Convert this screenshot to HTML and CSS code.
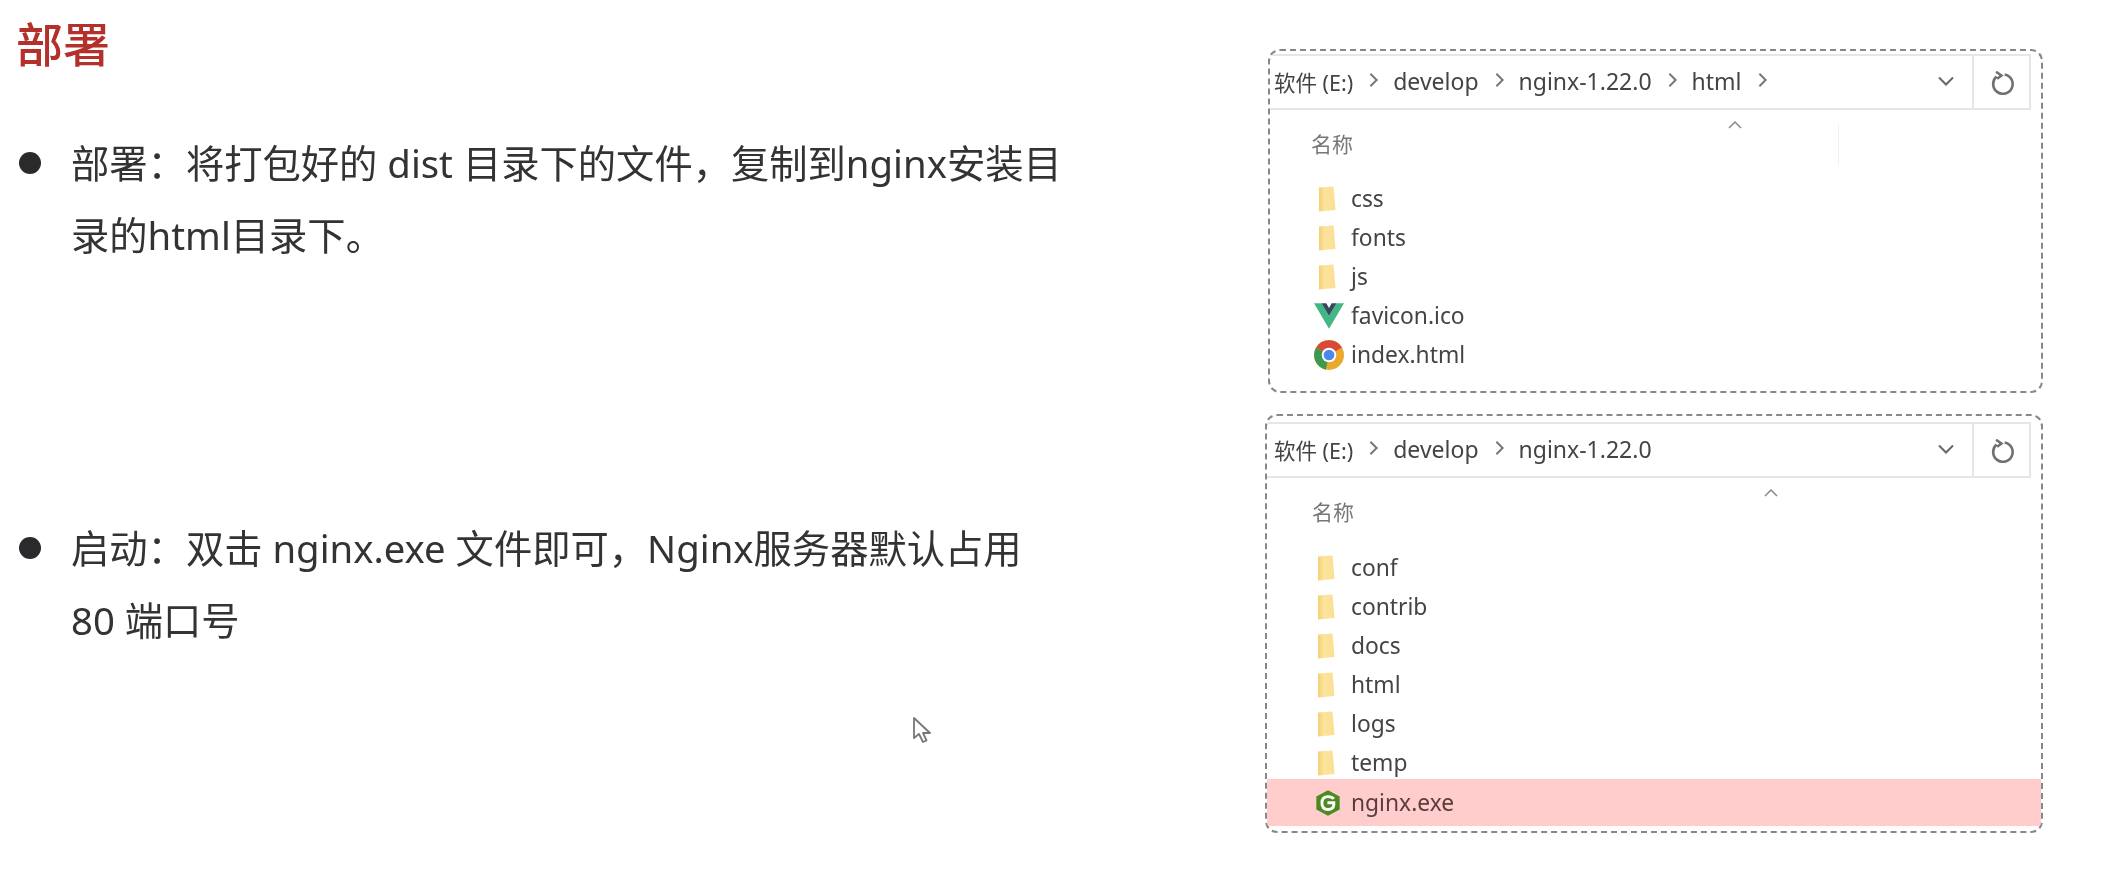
FILE: index.html
```html
<!DOCTYPE html>
<html lang="zh-CN">
<head>
<meta charset="utf-8">
<title>部署</title>
<link rel="stylesheet" href="styles.css">
</head>
<body>
<svg class="defs" width="0" height="0" aria-hidden="true">
  <defs>
    <linearGradient id="fold" x1="0" y1="0" x2="1" y2="0">
      <stop offset="0" stop-color="#f3cf72"/>
      <stop offset="0.35" stop-color="#fce49d"/>
      <stop offset="1" stop-color="#fbdf92"/>
    </linearGradient>
    <symbol id="folder" viewBox="0 0 18 26">
      <path d="M1 1.5 L15.5 0.5 L17.5 24 L1 25.5 Z" fill="url(#fold)"/>
    </symbol>
    <symbol id="chev" viewBox="0 0 10 16">
      <path d="M2.5 3 L7.5 8 L2.5 13" fill="none" stroke="#777" stroke-width="1.6"/>
    </symbol>
    <symbol id="down" viewBox="0 0 18 12">
      <path d="M2 2.5 L9 9.5 L16 2.5" fill="none" stroke="#666" stroke-width="2"/>
    </symbol>
    <symbol id="up" viewBox="0 0 16 10">
      <path d="M2 8 L8 2 L14 8" fill="none" stroke="#888" stroke-width="1.5"/>
    </symbol>
    <symbol id="refresh" viewBox="0 0 24 24">
      <path d="M6.500 2.500 L11.500 6 L7.500 9 M14.500 5 A9 9 0 1 1 7 7" fill="none" stroke="#707070" stroke-width="2.400"/>
    </symbol>
  </defs>
</svg>
<div class="page">
  <section class="notes">
    <h1 class="title">部署</h1>
    <ul class="points">
      <li class="point">部署：将打包好的 dist 目录下的文件，复制到nginx安装目<br>录的html目录下。</li>
      <li class="point">启动：双击 nginx.exe 文件即可，Nginx服务器默认占用<br>80 端口号</li>
    </ul>
  </section>
  <section class="shots">
    <div class="panel panel-one">
      <div class="bar">
        <div class="crumbs">
          <span class="drive">软件 (E:)</span><svg class="chev"><use href="#chev"/></svg>
          <span>develop</span><svg class="chev"><use href="#chev"/></svg>
          <span>nginx-1.22.0</span><svg class="chev"><use href="#chev"/></svg>
          <span>html</span><svg class="chev"><use href="#chev"/></svg>
        </div>
        <svg class="down"><use href="#down"/></svg>
        <div class="reload"><svg class="refresh"><use href="#refresh"/></svg></div>
      </div>
      <div class="head head-one">
        <svg class="up"><use href="#up"/></svg>
        <span class="head-label">名称</span>
        <i class="head-rule"></i>
      </div>
      <ul class="files">
        <li class="file"><svg class="ico"><use href="#folder"/></svg>css</li>
        <li class="file"><svg class="ico"><use href="#folder"/></svg>fonts</li>
        <li class="file"><svg class="ico"><use href="#folder"/></svg>js</li>
        <li class="file">
          <svg class="ico ico-app" viewBox="0 0 28 26"><path d="M0 1 H7 L14 13 L21 1 H28 L14 25 Z" fill="#41b883"/><path d="M7 1 H11.500 L14 5.500 L16.500 1 H21 L14 13 Z" fill="#35495e"/></svg>favicon.ico
        </li>
        <li class="file">
          <svg class="ico ico-app" viewBox="0 0 28 28"><circle cx="14" cy="14" r="14" fill="#e8a92d"/><path d="M14 14 L2 7 A14 14 0 0 1 26.100 7 Z" fill="#d9483b"/><path d="M14 14 L2 7 A14 14 0 0 0 11 27.700 Z" fill="#3c9a50"/><circle cx="14" cy="14" r="6.800" fill="#fff"/><circle cx="14" cy="14" r="5" fill="#4a89ea"/></svg>index.html
        </li>
      </ul>
    </div>
    <div class="panel panel-two">
      <div class="bar">
        <div class="crumbs">
          <span class="drive">软件 (E:)</span><svg class="chev"><use href="#chev"/></svg>
          <span>develop</span><svg class="chev"><use href="#chev"/></svg>
          <span>nginx-1.22.0</span>
        </div>
        <svg class="down"><use href="#down"/></svg>
        <div class="reload"><svg class="refresh"><use href="#refresh"/></svg></div>
      </div>
      <div class="head head-two">
        <svg class="up"><use href="#up"/></svg>
        <span class="head-label">名称</span>
      </div>
      <ul class="files">
        <li class="file"><svg class="ico"><use href="#folder"/></svg>conf</li>
        <li class="file"><svg class="ico"><use href="#folder"/></svg>contrib</li>
        <li class="file"><svg class="ico"><use href="#folder"/></svg>docs</li>
        <li class="file"><svg class="ico"><use href="#folder"/></svg>html</li>
        <li class="file"><svg class="ico"><use href="#folder"/></svg>logs</li>
        <li class="file"><svg class="ico"><use href="#folder"/></svg>temp</li>
        <li class="file file-hit">
          <svg class="ico ico-g" viewBox="0 0 24 24"><path d="M12 1 L22 6.500 V17.500 L12 23 L2 17.500 V6.500 Z" fill="#4b8a1f"/><path d="M17 8.500 Q15.500 6.500 12 6.500 Q6.800 6.500 6.800 12 Q6.800 17.500 12 17.500 Q17 17.500 17 13 V11.800 H11.500" fill="none" stroke="#fff" stroke-width="2.500"/></svg>nginx.exe
        </li>
      </ul>
    </div>
  </section>
  <svg class="cursor" viewBox="0 0 20 28"><path d="M2 2 V22 L7 18 L11 26 L14.500 24.500 L11 17 H18 Z" fill="#fff" stroke="#777" stroke-width="1.800" stroke-linejoin="round"/></svg>
</div>
</body>
</html>
```

FILE: styles.css
```css
* { box-sizing: border-box; }
html, body { margin: 0; height: 100%; background: #fff; }
ul { list-style: none; margin: 0; padding: 0; }
.defs { position: absolute; }

.page {
  position: relative;
  display: flex;
  width: 2118px;
  height: 884px;
  overflow: hidden;
  filter: blur(0.55px);
  font-family: "Noto Sans", "Noto Sans CJK SC", sans-serif;
}

.notes { width: 1265px; padding: 0 0 0 16px; flex: none; }
.title {
  margin: 17px 0 0;
  font-size: 47px;
  line-height: 54px;
  font-weight: 500;
  color: #b4302a;
}
.points { margin-top: 56px; }
.point {
  position: relative;
  padding-left: 55px;
  font-size: 38.3px;
  line-height: 72px;
  color: #333;
  white-space: nowrap;
}
.point + .point { margin-top: 241px; }
.point::before {
  content: "";
  position: absolute;
  left: 3px;
  top: 25px;
  width: 22px;
  height: 22px;
  border-radius: 50%;
  background: #2a2a2c;
}

.shots { flex: 1; padding-top: 49px; }
.panel {
  border: 2px dashed #888;
  border-radius: 12px;
  width: 778px;
  overflow: hidden;
}
.panel-one { margin-left: 3px; width: 775px; height: 344px; }
.panel-two { margin-top: 21px; height: 419px; }

.bar {
  display: flex;
  align-items: center;
  height: 56px;
  margin: 3px 10px 0 0;
  border: solid #e6e6e6;
  border-width: 2px 2px 2px 0;
  padding: 0 0 2px 4px;
  font-size: 23px;
  color: #444;
}
.panel-two .bar { margin-top: 6px; padding-left: 7px; }
.crumbs { flex: 1; display: flex; align-items: center; }
.drive { font-size: 21.5px; }
.chev { width: 13px; height: 20px; margin: 0 13px 2px 14px; }
.down { width: 18px; height: 12px; margin-right: 17px; }
.reload {
  display: flex;
  align-items: center;
  justify-content: center;
  width: 57px;
  align-self: stretch;
  margin-bottom: -2px;
  border-left: 2px solid #e6e6e6;
}
.refresh { width: 26px; height: 26px; }

.head { position: relative; }
.head-one { height: 69px; }
.head-two { height: 70px; }
.up { position: absolute; top: 10px; width: 16px; height: 10px; }
.head-one .up { left: 457px; }
.head-two .up { left: 496px; }
.head-label {
  position: absolute;
  left: 41px;
  top: 19px;
  font-size: 21px;
  line-height: 30px;
  color: #777;
}
.head-two .head-label { left: 45px; }
.head-rule {
  position: absolute;
  left: 568px;
  top: 14px;
  width: 1px;
  height: 42px;
  background: #f1f1f1;
}

.files { font-size: 22.8px; color: #444; }
.file {
  display: flex;
  align-items: center;
  gap: 15px;
  height: 39px;
  padding-left: 48px;
  line-height: 39px;
}
.ico { width: 18px; height: 26px; flex: none; }
.ico-app { width: 30px; height: 30px; margin-left: -4px; margin-right: -8px; }
.ico-g { width: 28px; height: 28px; margin-left: -3px; margin-right: -7px; }
.panel-two .file { padding-left: 50px; gap: 16px; }
.file-hit {
  height: 47px;
  margin-top: -3px;
  background: #ffcdcb;
  color: #5a3d3d;
}

.cursor {
  position: absolute;
  left: 912px;
  top: 716px;
  width: 20px;
  height: 28px;
}
```
